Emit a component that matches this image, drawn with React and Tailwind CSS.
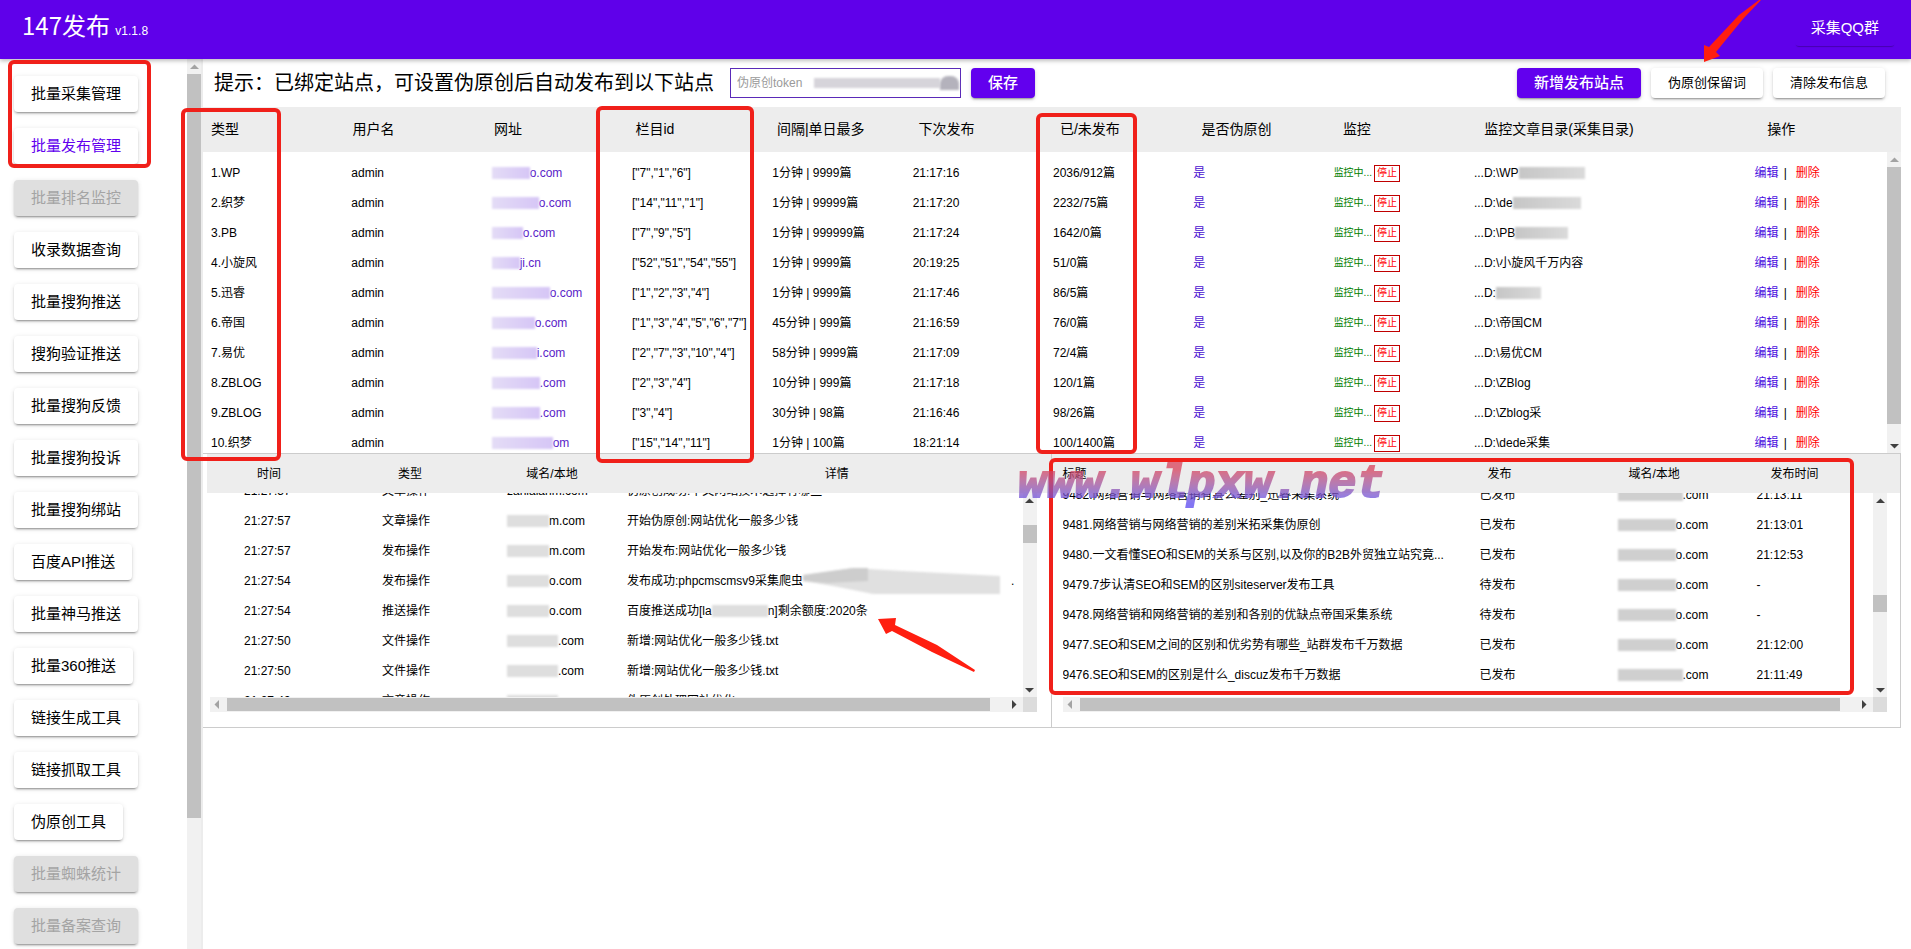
const menu = [
  { label: "批量采集管理" },
  { label: "批量发布管理", active: true },
  { label: "批量排名监控", disabled: true },
  { label: "收录数据查询" },
  { label: "批量搜狗推送" },
  { label: "搜狗验证推送" },
  { label: "批量搜狗反馈" },
  { label: "批量搜狗投诉" },
  { label: "批量搜狗绑站" },
  { label: "百度API推送" },
  { label: "批量神马推送" },
  { label: "批量360推送" },
  { label: "链接生成工具" },
  { label: "链接抓取工具" },
  { label: "伪原创工具" },
  { label: "批量蜘蛛统计", disabled: true },
  { label: "批量备案查询", disabled: true },
];

const sites = [
  { type: "1.WP", mask: 38, host: "o.com", ids: '["7","1","6"]', rate: "1分钟 | 9999篇", next: "21:17:16", count: "2036/912篇", dir: "...D:\\WP", dirMask: 66 },
  { type: "2.织梦", mask: 47, host: "o.com", ids: '["14","11","1"]', rate: "1分钟 | 99999篇", next: "21:17:20", count: "2232/75篇", dir: "...D:\\de", dirMask: 68 },
  { type: "3.PB", mask: 31, host: "o.com", ids: '["7","9","5"]', rate: "1分钟 | 999999篇", next: "21:17:24", count: "1642/0篇", dir: "...D:\\PB", dirMask: 53 },
  { type: "4.小旋风", mask: 28, host: "ji.cn", ids: '["52","51","54","55"]', rate: "1分钟 | 9999篇", next: "20:19:25", count: "51/0篇", dir: "...D:\\小旋风千万内容" },
  { type: "5.迅睿", mask: 58, host: "o.com", ids: '["1","2","3","4"]', rate: "1分钟 | 9999篇", next: "21:17:46", count: "86/5篇", dir: "...D:", dirMask: 45 },
  { type: "6.帝国", mask: 43, host: "o.com", ids: '["1","3","4","5","6","7"]', rate: "45分钟 | 999篇", next: "21:16:59", count: "76/0篇", dir: "...D:\\帝国CM" },
  { type: "7.易优", mask: 45, host: "i.com", ids: '["2","7","3","10","4"]', rate: "58分钟 | 9999篇", next: "21:17:09", count: "72/4篇", dir: "...D:\\易优CM" },
  { type: "8.ZBLOG", mask: 48, host: ".com", ids: '["2","3","4"]', rate: "10分钟 | 999篇", next: "21:17:18", count: "120/1篇", dir: "...D:\\ZBlog" },
  { type: "9.ZBLOG", mask: 48, host: ".com", ids: '["3","4"]', rate: "30分钟 | 98篇", next: "21:16:46", count: "98/26篇", dir: "...D:\\Zblog采" },
  { type: "10.织梦", mask: 61, host: "om", ids: '["15","14","11"]', rate: "1分钟 | 100篇", next: "18:21:14", count: "100/1400篇", dir: "...D:\\dede采集" },
];

const logs = [
  { time: "21:27:57", type: "文章操作", host: "zanlalahm.com", text: "伪原创成功:中文网站技术选择有哪些" },
  { time: "21:27:57", type: "文章操作", mask: 42, host: "m.com", text: "开始伪原创:网站优化一般多少钱" },
  { time: "21:27:57", type: "发布操作", mask: 42, host: "m.com", text: "开始发布:网站优化一般多少钱" },
  { time: "21:27:54", type: "发布操作", mask: 42, host: "o.com", text: "发布成功:phpcmscmsv9采集爬虫", textMask: 200, tail: "." },
  { time: "21:27:54", type: "推送操作", mask: 42, host: "o.com", text: "百度推送成功[la", textMask: 56, tail: "n]剩余额度:2020条" },
  { time: "21:27:50", type: "文件操作", mask: 51, host: ".com", text: "新增:网站优化一般多少钱.txt" },
  { time: "21:27:50", type: "文件操作", mask: 51, host: ".com", text: "新增:网站优化一般多少钱.txt" },
  { time: "21:27:49", type: "文章操作", mask: 51, host: ".com", text: "伪原创处理网站优化" },
];

const articles = [
  { title: "9482.网络营销与网络营销有甚么差别_迅睿采集系统", state: "已发布", mask: 65, host: ".com", time: "21:13:11" },
  { title: "9481.网络营销与网络营销的差别米拓采集伪原创", state: "已发布", mask: 58, host: "o.com", time: "21:13:01" },
  { title: "9480.一文看懂SEO和SEM的关系与区别,以及你的B2B外贸独立站究竟...", state: "已发布", mask: 58, host: "o.com", time: "21:12:53" },
  { title: "9479.7步认清SEO和SEM的区别siteserver发布工具", state: "待发布", mask: 58, host: "o.com", time: "-" },
  { title: "9478.网络营销和网络营销的差别和各别的优缺点帝国采集系统", state: "待发布", mask: 58, host: "o.com", time: "-" },
  { title: "9477.SEO和SEM之间的区别和优劣势有哪些_站群发布千万数据", state: "已发布", mask: 58, host: "o.com", time: "21:12:00" },
  { title: "9476.SEO和SEM的区别是什么_discuz发布千万数据", state: "已发布", mask: 65, host: ".com", time: "21:11:49" },
];

const raised = "shadow-[0_3px_1px_-2px_rgba(0,0,0,0.2),0_2px_2px_0_rgba(0,0,0,0.14),0_1px_5px_0_rgba(0,0,0,0.12)]";

function Mask({ width, className = "h-3 bg-[#d4d4d4]" }) {
  return (
    <span
      className={`inline-block shrink-0 blur-[1px] ${className}`}
      style={{ width }}
    />
  );
}

const arrows = {
  up: "M3 10 7.5 5.500 12 10z",
  down: "M3 6 7.5 10.500 12 6z",
  left: "M9 3 4.500 7.5 9 12z",
  right: "M6 3 10.500 7.5 6 12z",
};

function Arrow({ dir, className = "fill-[#404040]" }) {
  return (
    <svg viewBox="0 0 15 15" className={`size-[15px] shrink-0 ${className}`}>
      <path d={arrows[dir]} />
    </svg>
  );
}

// before / size are percentages of the track
function VScroll({ before, size, upClass, hasDown = true }) {
  return (
    <div className="flex w-[14px] shrink-0 flex-col items-center bg-[#f1f1f1]">
      <Arrow dir="up" className={upClass} />
      <div className="w-full grow">
        <div style={{ height: `${before}%` }} />
        <div className="w-full bg-[#c1c1c1]" style={{ height: `${size}%` }} />
      </div>
      {hasDown && <Arrow dir="down" />}
    </div>
  );
}

function HScroll() {
  return (
    <div className="flex h-[15px] items-center bg-[#f1f1f1]">
      <Arrow dir="left" className="fill-[#a3a3a3]" />
      <div className="ml-0.5 h-[13px] grow bg-[#c1c1c1]" />
      <div className="w-4" />
      <Arrow dir="right" />
      <div className="ml-0.5 h-full w-[14px] bg-[#dcdcdc]" />
    </div>
  );
}

function Sidebar() {
  return (
    <aside className="flex w-[203px] shrink-0 overflow-hidden border-r-2 border-[#ececec]">
      <nav className="flex grow flex-col items-start gap-4 pt-[17px] pl-3.5">
        {menu.map((item) => (
          <button
            key={item.label}
            disabled={item.disabled}
            className={`h-9 shrink-0 rounded px-[17px] text-[15px] whitespace-nowrap ${raised} ${
              item.disabled
                ? "bg-[#dfdfdf] text-[#a4a4a4]"
                : item.active
                  ? "bg-white text-[#6200ee]"
                  : "bg-white text-black"
            }`}
          >
            {item.label}
          </button>
        ))}
      </nav>
      <VScroll before={0} size={85} upClass="fill-[#a3a3a3]" hasDown={false} />
    </aside>
  );
}

function Toolbar() {
  return (
    <div className="flex h-12 shrink-0 items-center pr-4 pl-[11px]">
      <label htmlFor="token" className="text-xl whitespace-nowrap">
        提示：已绑定站点，可设置伪原创后自动发布到以下站点
      </label>
      <div className="relative ml-4">
        <input
          id="token"
          placeholder="伪原创token"
          className="h-[30px] w-[231px] border border-[#5a2ab8] px-1.5 text-xs outline-none placeholder:text-[#9a9a9a]"
        />
        <div className="absolute top-2 left-21 flex items-center">
          <Mask width={126} className="h-2.5 bg-[#d6d4da]" />
          <Mask width={19} className="h-3.5 rounded-t-lg bg-[#b4b2bc]" />
        </div>
      </div>
      <button className={`ml-2.5 h-[30px] rounded bg-[#6200ee] px-[17px] text-[15px] font-medium text-white ${raised}`}>
        保存
      </button>
      <div className="ml-auto flex gap-2.5">
        <button className={`h-[30px] rounded bg-[#6200ee] px-[17px] text-[15px] font-medium text-white ${raised}`}>
          新增发布站点
        </button>
        <button className={`h-[30px] rounded bg-white px-[17px] text-[13px] ${raised}`}>伪原创保留词</button>
        <button className={`h-[30px] rounded bg-white px-[17px] text-[13px] ${raised}`}>清除发布信息</button>
      </div>
    </div>
  );
}

function SiteCols() {
  return (
    <colgroup>
      {["a", "b", "c", "d", "e", "f", "g", "h", "i"].map((k) => (
        <col key={k} className="w-1/12" />
      ))}
      <col className="w-2/12" />
      <col className="w-1/12" />
    </colgroup>
  );
}

const siteHeads = ["类型", "用户名", "网址", "栏目id", "间隔|单日最多", "下次发布", "已/未发布", "是否伪原创", "监控", "监控文章目录(采集目录)", "操作"];

function SiteTable() {
  return (
    <section className="flex flex-col">
      <table className="w-full table-fixed bg-[#ededed] text-sm">
        <SiteCols />
        <thead>
          <tr className="h-[45px]">
            {siteHeads.map((h) => (
              <th key={h} className="pb-0.5 pl-2 text-left font-normal whitespace-nowrap">
                {h}
              </th>
            ))}
          </tr>
        </thead>
      </table>
      <div className="flex h-[301px] overflow-hidden">
        <div className="grow pt-1.5">
          <table className="w-full table-fixed text-xs">
            <SiteCols />
            <tbody>
              {sites.map((s) => (
                <tr key={s.type} className="h-[30px] whitespace-nowrap *:pl-2">
                  <td>{s.type}</td>
                  <td>admin</td>
                  <td>
                    <a href="#site" className="flex items-center text-[#5a22c8]">
                      <Mask width={s.mask} className="h-3 bg-linear-to-r from-[#e4dcf6] to-[#d6c6f6]" />
                      {s.host}
                    </a>
                  </td>
                  <td>{s.ids}</td>
                  <td>{s.rate}</td>
                  <td>{s.next}</td>
                  <td>{s.count}</td>
                  <td>
                    <a href="#rewrite" className="text-[#4a10d0]">是</a>
                  </td>
                  <td>
                    <div className="flex items-center gap-0.5 text-[10px] text-[#008000]">
                      监控中...
                      <button className="h-[17px] w-[26px] border border-[#c00000] text-[10px] leading-none text-[#ff0000]">
                        停止
                      </button>
                    </div>
                  </td>
                  <td>
                    <div className="flex items-center">
                      {s.dir}
                      {s.dirMask && <Mask width={s.dirMask} className="h-3 bg-linear-to-r from-[#c6c6c6] to-[#dadada]" />}
                    </div>
                  </td>
                  <td>
                    <a href="#edit" className="text-[#4a10e0]">编辑</a>
                    <span className="mx-[5px]">|</span>
                    <a href="#delete" className="ml-1 text-[#ff0000]">删除</a>
                  </td>
                </tr>
              ))}
            </tbody>
          </table>
        </div>
        <VScroll before={0} size={95} upClass="fill-[#a3a3a3]" />
      </div>
    </section>
  );
}

function LogPanel() {
  return (
    <section className="w-1/2 border-r border-[#cccccc] pb-[15px] pl-1">
      <table className="w-full table-fixed bg-[#ededed] text-xs">
        <thead>
          <tr className="h-[39px]">
            <th className="w-[132px] pr-2 font-normal">时间</th>
            <th className="w-[142px] font-normal">类型</th>
            <th className="w-[142px] font-normal">域名/本地</th>
            <th className="font-normal">详情</th>
          </tr>
        </thead>
      </table>
      <div className="mr-3.5 ml-[3px]">
        <div className="flex h-[204px] overflow-hidden">
          <div className="grow">
            <table className="-mt-[17px] w-full table-fixed text-xs">
              <tbody>
                {logs.map((l, i) => (
                  <tr key={i} className="h-[30px] whitespace-nowrap">
                    <td className="w-[172px] pl-[34px]">{l.time}</td>
                    <td className="w-[125px]">{l.type}</td>
                    <td className="w-[120px]">
                      <div className="flex items-center">
                        {l.mask && <Mask width={l.mask} className="h-3 bg-[#dedede]" />}
                        {l.host}
                      </div>
                    </td>
                    <td>
                      <div className="flex items-center">
                        {l.text}
                        {l.textMask === 200 ? (
                          <svg viewBox="0 0 200 30" className="mr-2 h-[30px] w-[200px] shrink-0 blur-[1px]">
                            <path d="M0 9 50 2 100 5 197 10V28H70L30 20 0 15z" fill="#e0e0e0" />
                            <path d="M0 9 50 2H65V15L25 17 0 15z" fill="#cdcdcd" />
                          </svg>
                        ) : (
                          l.textMask && <Mask width={l.textMask} className="h-3 bg-[#dedede]" />
                        )}
                        {l.tail}
                      </div>
                    </td>
                  </tr>
                ))}
              </tbody>
            </table>
          </div>
          <VScroll before={10} size={10} />
        </div>
        <HScroll />
      </div>
    </section>
  );
}

function ArticlePanel() {
  return (
    <section className="w-1/2 pb-[15px]">
      <table className="w-full table-fixed bg-[#ededed] text-xs">
        <thead>
          <tr className="h-[39px] text-left">
            <th className="w-[436px] pl-[11px] font-normal">标题</th>
            <th className="w-[141px] font-normal">发布</th>
            <th className="w-[142px] font-normal">域名/本地</th>
            <th className="font-normal">发布时间</th>
          </tr>
        </thead>
      </table>
      <div className="mr-[13px] ml-[11px]">
        <div className="flex h-[204px] overflow-hidden">
          <div className="grow">
            <table className="-mt-[13px] w-full table-fixed text-xs">
              <tbody>
                {articles.map((a) => (
                  <tr key={a.title} className="h-[30px] whitespace-nowrap">
                    <td className="w-[417px]">{a.title}</td>
                    <td className="w-[138px]">{a.state}</td>
                    <td className="w-[139px]">
                      <div className="flex items-center">
                        <Mask width={a.mask} className="h-3 bg-[#cfcfcf]" />
                        {a.host}
                      </div>
                    </td>
                    <td>{a.time}</td>
                  </tr>
                ))}
              </tbody>
            </table>
          </div>
          <VScroll before={50} size={10} />
        </div>
        <HScroll />
      </div>
    </section>
  );
}

// Red marker boxes, arrows and watermark drawn on top of the page
function Annotations() {
  const box = "absolute rounded-md border-4 border-[#f0201a]";
  return (
    <div className="pointer-events-none absolute inset-0 z-20">
      <div className={`${box} top-[60px] left-[8px] h-[108px] w-[143px]`} />
      <div className={`${box} top-[108px] left-[181px] h-[353px] w-[100px]`} />
      <div className={`${box} top-[106px] left-[596px] h-[357px] w-[158px]`} />
      <div className={`${box} top-[113px] left-[1036px] h-[341px] w-[101px]`} />
      <div className={`${box} top-[458px] left-[1049px] h-[237px] w-[805px]`} />
      <svg viewBox="0 0 60 64" className="absolute top-0 left-[1702px] h-16 w-[60px] fill-[#ff1e10]">
        <path d="M2 62 2 45 7 47 37 15 57 0H59L41 19 14 52 18 56z" />
      </svg>
      <svg viewBox="0 0 100 56" className="absolute top-[617px] left-[877px] h-14 w-[100px] fill-[#ff1e10]">
        <path d="M1 2 19 1 18 8 60 28 98 53 97 55 55 35 15 14 9 17z" />
      </svg>
      <div className="absolute top-[459px] left-[1018px] bg-linear-to-b from-[#d8405a] from-20% to-[#5a48f0] to-85% bg-clip-text [font-family:'Liberation_Mono',monospace] text-[47px] leading-[52px] font-bold text-transparent italic opacity-75 [-webkit-text-stroke:2px_transparent]">
        www.wlpxw.net
      </div>
    </div>
  );
}

export default function App() {
  return (
    <div className="relative flex h-screen flex-col overflow-hidden bg-white [font-family:'Liberation_Sans','Noto_Sans_CJK_SC',sans-serif] text-black">
      <header className="z-10 flex h-[59px] shrink-0 items-center justify-between bg-[#5f00ea] pr-4 pb-2.5 pl-[22px] text-white shadow-[0_2px_4px_rgba(0,0,0,0.25)]">
        <h1 className="[font-family:'Noto_Sans_CJK_SC',sans-serif] text-2xl leading-8">
          147发布{" "}
          <small className="[font-family:'Liberation_Sans',sans-serif] text-xs">v1.1.8</small>
        </h1>
        <a href="#qq" className="mt-2 rounded px-4 py-1.5 text-[15px] shadow-[0_2px_1px_-1px_rgba(0,0,0,0.25)]">
          采集QQ群
        </a>
      </header>
      <div className="flex min-h-0 grow">
        <Sidebar />
        <main className="flex min-w-0 grow flex-col pr-2.5">
          <Toolbar />
          <SiteTable />
          <div className="flex border-y border-r border-[#cccccc]">
            <LogPanel />
            <ArticlePanel />
          </div>
        </main>
      </div>
      <Annotations />
    </div>
  );
}
